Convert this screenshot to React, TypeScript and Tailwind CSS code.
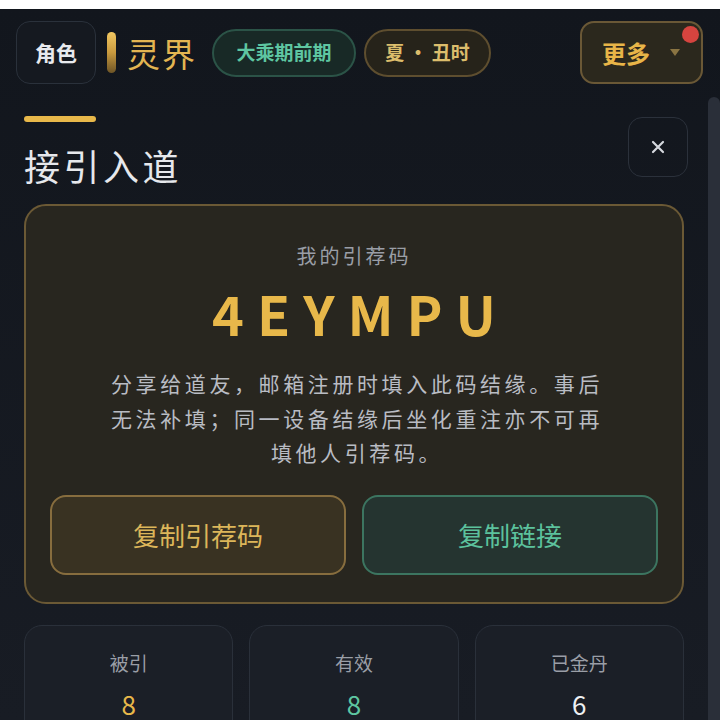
import React from "react";

const font = { fontFamily: '"Noto Sans CJK SC", "Noto Sans", sans-serif' };

export default function App() {
  return (
    <div className="w-[720px] h-[720px] overflow-hidden bg-white pt-[9px]" style={font}>
      <div className="relative h-[711px] bg-gradient-to-b from-[#12161d] to-[#181c24] overflow-hidden">
        {/* header */}
        <div className="flex items-center pt-[12px] pl-4 pr-[17px]">
          <div className="w-[80px] h-[63px] rounded-[14px] border border-[#2a313b] bg-[#151920] flex items-center justify-center text-[21px] font-bold text-[#e8eaee]">
            角色
          </div>
          <div className="ml-[11px] w-[9px] h-[41px] rounded-full bg-gradient-to-b from-[#f2c862] via-[#c99a3e] to-[#6e5526]" />
          <div className="ml-[11px] text-[33px] leading-[40px] text-[#e3b552] tracking-[2px]">灵界</div>
          <div className="ml-[15px] w-[144px] h-[48px] rounded-full border-2 border-[#2b5347] bg-[#182926] flex items-center justify-center text-[19px] font-bold text-[#5ec6a1]">
            大乘期前期
          </div>
          <div className="ml-[8px] w-[127px] h-[48px] rounded-full border-2 border-[#5e4e2f] bg-[#26231a] flex items-center justify-center text-[19px] font-bold text-[#dcbd6c]">
            夏 · 丑时
          </div>
          <div className="flex-1" />
          <div className="relative w-[123px] h-[63px] rounded-[14px] border-2 border-[#6a5836] bg-[#2b281d] flex items-center pl-[20px]">
            <span className="text-[24px] font-bold text-[#e8b548]">更多</span>
            <svg className="ml-[20px]" width="10" height="7" viewBox="0 0 10 7">
              <path d="M0 0 L10 0 L5 7 Z" fill="#8a7442" />
            </svg>
            <div className="absolute top-[3px] right-[2px] w-[17px] h-[17px] rounded-full bg-[#d6443f]" />
          </div>
        </div>

        {/* content */}
        <div className="w-[708px] px-6">
          <div className="flex justify-between items-start mt-[32px]">
            <div>
              <div className="w-[72px] h-[6px] rounded-full bg-[#e8b84a]" />
              <div className="mt-[19px] text-[36px] leading-[48px] text-[#e6e8ec] tracking-[3.5px]">接引入道</div>
            </div>
            <div className="-mr-1 mt-[1px] w-[60px] h-[60px] rounded-[14px] border border-[#2b313b] flex items-center justify-center">
              <svg width="14" height="14" viewBox="0 0 14 14">
                <path d="M2 2 L12 12 M12 2 L2 12" stroke="#d5d8de" strokeWidth="2.2" strokeLinecap="round" />
              </svg>
            </div>
          </div>

          <div className="mt-[15px] h-[400px] rounded-[22px] border-2 border-[#6b5935] bg-[#28261f] px-6 pt-[36px] flex flex-col items-center">
            <div className="text-[20px] leading-[28px] text-[#9a9ea6] tracking-[3px]">我的引荐码</div>
            <div className="mt-[13px] text-[54px] leading-[60px] font-bold text-[#e8b84a] tracking-[13px] pl-[13px]">4EYMPU</div>
            <div className="mt-[23px] pl-[6px] text-[21px] leading-[34.5px] text-[#b9bcc3] tracking-[3.6px] text-center w-[506px]">
              分享给道友，邮箱注册时填入此码结缘。事后无法补填；同一设备结缘后坐化重注亦不可再填他人引荐码。
            </div>
            <div className="mt-[25px] w-full grid grid-cols-2 gap-4">
              <div className="h-[80px] rounded-[16px] border-2 border-[#876d3e] bg-[#393222] flex items-center justify-center text-[26px] text-[#dcb65a]">
                复制引荐码
              </div>
              <div className="h-[80px] rounded-[16px] border-2 border-[#3c7560] bg-[#253430] flex items-center justify-center text-[26px] text-[#5cc29d]">
                复制链接
              </div>
            </div>
          </div>

          <div className="mt-[21px] grid grid-cols-3 gap-4">
            {[
              { l: "被引", v: "8", c: "text-[#e8b84a]" },
              { l: "有效", v: "8", c: "text-[#5ec6a1]" },
              { l: "已金丹", v: "6", c: "text-[#eef0f3]" },
            ].map((s) => (
              <div key={s.l} className="h-[120px] rounded-[18px] border border-[#2a303a] bg-[#1b1f27] flex flex-col items-center pt-[24px]">
                <div className="text-[19px] leading-[26px] text-[#9a9ea6]">{s.l}</div>
                <div className={"mt-[12px] text-[26px] leading-[32px] " + s.c}>{s.v}</div>
              </div>
            ))}
          </div>
        </div>

        {/* scrollbar */}
        <div className="absolute right-0 top-[88px] w-[12px] h-[700px] rounded-t-full bg-[#2a2f39]" />
      </div>
    </div>
  );
}
